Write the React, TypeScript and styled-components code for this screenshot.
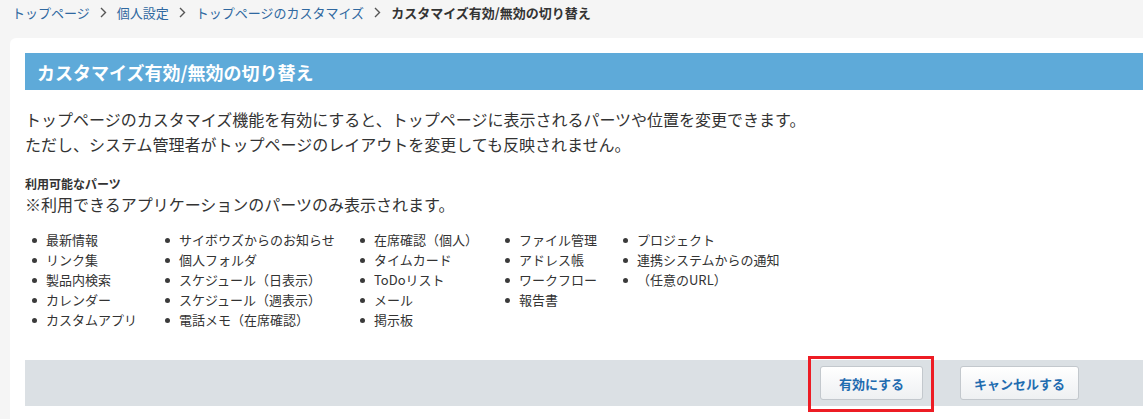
import React from "react";
import styled, { createGlobalStyle } from "styled-components";

const Global = createGlobalStyle`
  html, body { margin: 0; padding: 0; }
  body {
    background: #f5f5f5;
    font-family: "Noto Sans CJK JP", "Noto Sans", sans-serif;
    color: #333;
    overflow: hidden;
  }
`;

const Page = styled.div`
  width: 1143px;
  height: 419px;
  overflow: hidden;
`;

const Breadcrumb = styled.nav`
  display: flex;
  align-items: center;
  height: 25px;
  padding: 0 12px;
  font-size: 13px;
  gap: 10px;
`;

const Crumb = styled.a`
  color: #2f68a0;
  text-decoration: none;
`;

const CurrentCrumb = styled.span`
  color: #333;
  font-weight: bold;
`;

const Sep = styled.svg`
  width: 7px;
  height: 11px;
  flex: none;
`;

const Card = styled.section`
  margin: 13px 0 0 10px;
  width: 1400px;
  background: #fff;
  border-top-left-radius: 6px;
  padding: 15px 0 30px 15px;
`;

const Header = styled.h1`
  margin: 0;
  height: 37px;
  display: flex;
  align-items: center;
  padding-left: 12px;
  background: #5eaad9;
  color: #fff;
  font-size: 18px;
  font-weight: bold;
`;

const Description = styled.p`
  margin: 17px 0 0;
  font-size: 16px;
  line-height: 25px;
`;

const SubTitle = styled.h2`
  margin: 18px 0 0;
  font-size: 12px;
  line-height: 18px;
  font-weight: bold;
`;

const Note = styled.p`
  margin: 0;
  font-size: 16px;
  line-height: 22px;
`;

const Columns = styled.div`
  display: flex;
  margin: 15px 0 0 7px;
`;

const Column = styled.ul<{ $w: number }>`
  list-style: none;
  margin: 0;
  padding: 0;
  width: ${(p) => p.$w}px;
  flex: none;
`;

const Item = styled.li`
  position: relative;
  padding-left: 14px;
  font-size: 13px;
  line-height: 20px;
  white-space: nowrap;
  &::before {
    content: "";
    position: absolute;
    left: 0;
    top: 8px;
    width: 5px;
    height: 5px;
    border-radius: 50%;
    background: #3a3a3a;
  }
`;

const ActionBar = styled.div`
  margin-top: 30px;
  height: 46px;
  background: #dbe0e4;
  display: flex;
  align-items: center;
  padding-left: 795px;
  gap: 37px;
`;

const Highlight = styled.div`
  position: relative;
  display: flex;
  &::after {
    content: "";
    position: absolute;
    left: -12px;
    right: -11px;
    top: -10px;
    bottom: -12px;
    border: 3px solid #ed1c24;
    pointer-events: none;
  }
`;

const Button = styled.button<{ $w: number }>`
  width: ${(p) => p.$w}px;
  height: 34px;
  border: 1px solid #c3c8cd;
  border-radius: 3px;
  background: linear-gradient(#ffffff, #eef0f2);
  color: #1f6cb0;
  font-family: "Noto Sans CJK JP", sans-serif;
  font-size: 13px;
  font-weight: bold;
  cursor: pointer;
  padding: 0;
`;

const columns: { w: number; items: string[] }[] = [
  { w: 133, items: ["最新情報", "リンク集", "製品内検索", "カレンダー", "カスタムアプリ"] },
  { w: 195, items: ["サイボウズからのお知らせ", "個人フォルダ", "スケジュール（日表示）", "スケジュール（週表示）", "電話メモ（在席確認）"] },
  { w: 145, items: ["在席確認（個人）", "タイムカード", "ToDoリスト", "メール", "掲示板"] },
  { w: 118, items: ["ファイル管理", "アドレス帳", "ワークフロー", "報告書"] },
  { w: 200, items: ["プロジェクト", "連携システムからの通知", "（任意のURL）"] },
];

const Chevron = () => (
  <Sep viewBox="0 0 7 11">
    <path d="M1 1l4.5 4.5L1 10" fill="none" stroke="#555" strokeWidth="1.4" />
  </Sep>
);

export default function App() {
  return (
    <Page>
      <Global />
      <Breadcrumb>
        <Crumb href="#">トップページ</Crumb>
        <Chevron />
        <Crumb href="#">個人設定</Crumb>
        <Chevron />
        <Crumb href="#">トップページのカスタマイズ</Crumb>
        <Chevron />
        <CurrentCrumb>カスタマイズ有効/無効の切り替え</CurrentCrumb>
      </Breadcrumb>
      <Card>
        <Header>カスタマイズ有効/無効の切り替え</Header>
        <Description>
          トップページのカスタマイズ機能を有効にすると、トップページに表示されるパーツや位置を変更できます。
          <br />
          ただし、システム管理者がトップページのレイアウトを変更しても反映されません。
        </Description>
        <SubTitle>利用可能なパーツ</SubTitle>
        <Note>※利用できるアプリケーションのパーツのみ表示されます。</Note>
        <Columns>
          {columns.map((c, i) => (
            <Column key={i} $w={c.w}>
              {c.items.map((t) => (
                <Item key={t}>{t}</Item>
              ))}
            </Column>
          ))}
        </Columns>
        <ActionBar>
          <Highlight>
            <Button $w={103}>有効にする</Button>
          </Highlight>
          <Button $w={119}>キャンセルする</Button>
        </ActionBar>
      </Card>
    </Page>
  );
}
